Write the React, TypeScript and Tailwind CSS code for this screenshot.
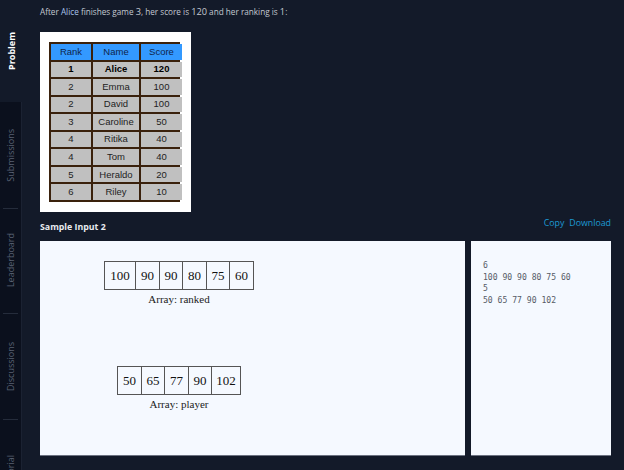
const ranking = [
  { rank: 1, name: "Alice", score: 120 },
  { rank: 2, name: "Emma", score: 100 },
  { rank: 2, name: "David", score: 100 },
  { rank: 3, name: "Caroline", score: 50 },
  { rank: 4, name: "Ritika", score: 40 },
  { rank: 4, name: "Tom", score: 40 },
  { rank: 5, name: "Heraldo", score: 20 },
  { rank: 6, name: "Riley", score: 10 },
];

const ranked = [
  { v: 100, w: "w-[31px]" },
  { v: 90, w: "w-[24px]" },
  { v: 90, w: "w-[23px]" },
  { v: 80, w: "w-[24px]" },
  { v: 75, w: "w-[23px]" },
  { v: 60, w: "w-[24px]" },
];

const player = [
  { v: 50, w: "w-[24px]" },
  { v: 65, w: "w-[23px]" },
  { v: 77, w: "w-[24px]" },
  { v: 90, w: "w-[23px]" },
  { v: 102, w: "w-[29px]" },
];

const tabs = [
  { label: "Submissions", h: "h-[106px]" },
  { label: "Leaderboard", h: "h-[105px]" },
  { label: "Discussions", h: "h-[106px]" },
  { label: "Editorial", h: "h-[106px]" },
];

/* ─── SIDEBAR ─────────────────────────────────────────────── */
function SideTabs() {
  return (
    <nav className="w-[22px] h-[470px] shrink-0 flex flex-col overflow-hidden">
      <div className="h-[102px] shrink-0 flex items-center justify-center">
        <span className="[writing-mode:vertical-rl] rotate-180 text-[9px] font-bold text-white leading-none">
          Problem
        </span>
      </div>
      {tabs.map((t, i) => (
        <div key={t.label} className={`${t.h} shrink-0 bg-[#0b101d] border-r border-[#1b2232] relative flex items-center justify-center`}>
          {i > 0 && <div className="absolute top-0 left-[3px] w-[15px] h-px bg-[#252c3b]" />}
          <span className="[writing-mode:vertical-rl] rotate-180 text-[9px] text-[#596173] leading-none whitespace-nowrap">
            {t.label}
          </span>
        </div>
      ))}
    </nav>
  );
}

/* ─── RANKING TABLE IMAGE ─────────────────────────────────── */
function RankingTable() {
  return (
    <div className="w-[151px] h-[180px] bg-white p-[10px] pl-[9px]">
      <div className="w-[131px] h-[160px] bg-[#3a210c] p-[2px] grid grid-cols-[40px_46px_41px] auto-rows-fr gap-[2px] font-['Liberation_Sans',Arial,sans-serif] text-[9.5px]">
        {["Rank", "Name", "Score"].map((h) => (
          <div key={h} className="bg-[#3399ff] text-[#10254a] flex items-center justify-center">
            {h}
          </div>
        ))}
        {ranking.map((r, i) =>
          [r.rank, r.name, r.score].map((c, j) => (
            <div
              key={`${i}-${j}`}
              className={`bg-[#c0c0c0] text-[#222] flex items-center justify-center ${i === 0 ? "font-bold text-black" : ""}`}
            >
              {c}
            </div>
          ))
        )}
      </div>
    </div>
  );
}

/* ─── ARRAY FIGURE ────────────────────────────────────────── */
function ArrayFigure({ cells, label, className }: { cells: { v: number; w: string }[]; label: string; className: string }) {
  return (
    <div className={`flex flex-col items-center font-['Liberation_Serif','Times_New_Roman',serif] ${className}`}>
      <div className="flex h-[29px] border border-[#555] border-r-0">
        {cells.map((c, i) => (
          <div key={i} className={`${c.w} border-r border-[#555] flex items-center justify-center text-[13px] text-[#111]`}>
            {c.v}
          </div>
        ))}
      </div>
      <div className="mt-[2px] text-[11px] leading-[14px] text-[#222]">{label}</div>
    </div>
  );
}

export default function App() {
  return (
    <div className="w-[624px] h-[470px] bg-[#131a29] flex overflow-hidden font-['Open_Sans',sans-serif]">
      <SideTabs />

      <main className="flex-1 pl-[18px] pr-[13px] pt-[5px]">
        <p className="text-[8.2px] leading-[14px] text-[#c3c8d1]">
          After <span className="text-[#a9c4ea]">Alice</span> finishes game <span className="text-[9.2px]">3</span>, her
          score is <span className="text-[9.2px]">120</span> and her ranking is <span className="text-[9.2px]">1</span>:
        </p>

        <div className="mt-[13px]">
          <RankingTable />
        </div>

        <div className="mt-[1px] h-[24px] flex items-center justify-between">
          <span className="text-[8.8px] font-bold text-[#e8ebf0] mt-[6px]">Sample Input 2</span>
          <span className="flex gap-[5px] text-[8.8px] text-[#1d9bd4] -mt-[3px]">
            <span>Copy</span>
            <span>Download</span>
          </span>
        </div>

        <div className="mt-[4px] flex gap-[6px] h-[215px]">
          <div className="w-[425px] bg-[#f5f9ff] border-b border-[#6b7180] pt-[20px]">
            <ArrayFigure cells={ranked} label="Array: ranked" className="ml-[64px] w-fit" />
            <ArrayFigure cells={player} label="Array: player" className="ml-[77px] w-fit mt-[60px]" />
          </div>
          <div className="w-[140px] bg-[#f5f9ff] border-b border-[#6b7180] pt-[19px] pl-[12px]">
            <pre className="font-['DejaVu_Sans_Mono',monospace] text-[8.1px] leading-[11.7px] text-[#555b66]">
              {"6\n100 90 90 80 75 60\n5\n50 65 77 90 102"}
            </pre>
          </div>
        </div>
      </main>
    </div>
  );
}
